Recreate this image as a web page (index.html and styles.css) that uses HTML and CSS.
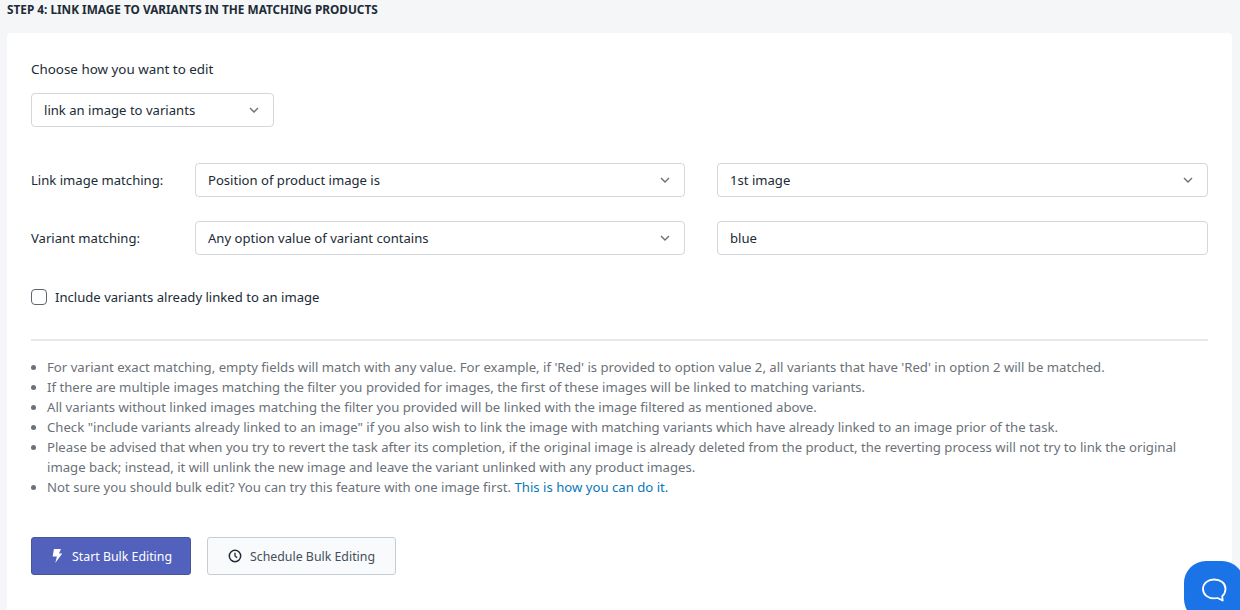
FILE: index.html
```html
<!DOCTYPE html>
<html lang="en">
<head>
    <meta charset="UTF-8">
    <title>Step 4</title>
    <link rel="stylesheet" href="styles.css">
</head>
<body>
    <h2 class="stepTitle">Step 4: Link image to variants in the matching products</h2>

    <section class="card">
        <p class="fieldLabel">Choose how you want to edit</p>
        <div class="select modeSelect">
            <span>link an image to variants</span>
            <svg class="chevron" viewBox="0 0 10 6"><path d="M1 1l4 4 4-4"/></svg>
        </div>

        <div class="matchRow firstRow">
            <label class="rowLabel">Link image matching:</label>
            <div class="select">
                <span>Position of product image is</span>
                <svg class="chevron" viewBox="0 0 10 6"><path d="M1 1l4 4 4-4"/></svg>
            </div>
            <div class="select">
                <span>1st image</span>
                <svg class="chevron" viewBox="0 0 10 6"><path d="M1 1l4 4 4-4"/></svg>
            </div>
        </div>

        <div class="matchRow">
            <label class="rowLabel">Variant matching:</label>
            <div class="select">
                <span>Any option value of variant contains</span>
                <svg class="chevron" viewBox="0 0 10 6"><path d="M1 1l4 4 4-4"/></svg>
            </div>
            <div class="select">
                <span>blue</span>
            </div>
        </div>

        <div class="checkRow">
            <span class="checkbox"></span>
            <span>Include variants already linked to an image</span>
        </div>

        <hr class="divider">

        <ul class="notes">
            <li>For variant exact matching, empty fields will match with any value. For example, if 'Red' is provided to option value 2, all variants that have 'Red' in option 2 will be matched.</li>
            <li>If there are multiple images matching the filter you provided for images, the first of these images will be linked to matching variants.</li>
            <li>All variants without linked images matching the filter you provided will be linked with the image filtered as mentioned above.</li>
            <li>Check "include variants already linked to an image" if you also wish to link the image with matching variants which have already linked to an image prior of the task.</li>
            <li>Please be advised that when you try to revert the task after its completion, if the original image is already deleted from the product, the reverting process will not try to link the original image back; instead, it will unlink the new image and leave the variant unlinked with any product images.</li>
            <li>Not sure you should bulk edit? You can try this feature with one image first. <a href="#">This is how you can do it.</a></li>
        </ul>

        <div class="actions">
            <button class="btn btnPrimary">
                <svg class="btnIcon" viewBox="0 0 12 16"><path fill="#fff" d="M2.500 0h8L8.300 5.200H12L4 16l1.900-7.500H1z"/></svg>
                <span>Start Bulk Editing</span>
            </button>
            <button class="btn btnPlain">
                <svg class="btnIcon" viewBox="0 0 16 16"><circle cx="8" cy="8" r="6.500" fill="none" stroke="#212b36" stroke-width="1.700"/><path d="M8 4.200V8l2.500 2" fill="none" stroke="#212b36" stroke-width="1.500"/></svg>
                <span>Schedule Bulk Editing</span>
            </button>
        </div>
    </section>

    <div class="chatBtn">
        <svg viewBox="0 0 28 28" width="28" height="28"><path d="M14 2.500c6.500 0 11.500 3.700 11.500 9.500 0 3.300-1.300 5.400-3.300 7.200l.5 4.300-5.200-2.500c-1 .3-2.300.4-3.500.4-6 0-11-3.700-11-9.400S8 2.500 14 2.500z" fill="none" stroke="#fff" stroke-width="1.800" stroke-linejoin="round"/></svg>
    </div>
</body>
</html>
```

FILE: styles.css
```css
* {
    box-sizing: border-box;
}

html, body {
    height: 610px;
    overflow: hidden;
}

body {
    margin: 0;
    background-color: #f4f6f8;
    color: #212b36;
    font-family: 'Noto Sans', sans-serif;
    font-size: 13.1px;
    position: relative;
}

.stepTitle {
    margin: 0;
    padding: 2px 7px 0;
    height: 33px;
    font-size: 11.8px;
    line-height: 15px;
    font-weight: 700;
    text-transform: uppercase;
}

.card {
    margin: 0 8px 0 7px;
    height: 600px;
    padding: 26px 24px;
    background: #fff;
    border-radius: 4px;
}

.fieldLabel {
    margin: 0 0 14px;
    font-size: 13.4px;
    line-height: 20px;
}

.select {
    height: 34px;
    padding: 0 14px 0 12px;
    display: flex;
    align-items: center;
    justify-content: space-between;
    border: 1px solid #d3d6da;
    border-radius: 4px;
    background: #fff;
}

.modeSelect {
    width: 243px;
}

.chevron {
    width: 10px;
    height: 6px;
    fill: none;
    stroke: #6b7178;
    stroke-width: 1.4;
}

.matchRow {
    display: grid;
    grid-template-columns: 164px 490px 491px;
    align-items: center;
    margin-top: 24px;
}

.matchRow .select:last-child {
    margin-left: 32px;
    width: 491px;
}

.firstRow {
    margin-top: 36px;
}

.rowLabel {
    font-size: 13.1px;
}

.checkRow {
    margin-top: 32px;
    display: flex;
    align-items: center;
    gap: 8px;
    line-height: 18px;
}

.checkRow span:last-child {
    padding-top: 1px;
}

.checkbox {
    width: 16px;
    height: 16px;
    border: 1px solid #5d6670;
    border-radius: 4px;
}

.divider {
    margin: 33px 0 0;
    border: 0;
    border-top: 2px solid #e6e8ea;
}

.notes {
    margin: 16px 0 0;
    padding-left: 16px;
    font-size: 13.17px;
    color: #6b7178;
    line-height: 20px;
}

.notes a {
    color: #0a78b5;
    text-decoration: none;
}

.actions {
    margin-top: 40px;
    display: flex;
    gap: 16px;
}

.btn {
    height: 38px;
    display: flex;
    align-items: center;
    justify-content: center;
    gap: 8px;
    font: inherit;
    font-size: 12.35px;
    border-radius: 3px;
    white-space: nowrap;
}

.btnIcon {
    width: 14px;
    height: 14px;
}

.btnPrimary {
    width: 160px;
    color: #fff;
    background: #5261bc;
    border: 1px solid #47549f;
}

.btnPlain {
    width: 189px;
    color: #454f5b;
    background: #f9fafb;
    border: 1px solid #c4cdd5;
}

.chatBtn {
    position: absolute;
    left: 1184px;
    top: 561px;
    width: 60px;
    height: 60px;
    border-radius: 22px;
    background: #1a74e8;
    display: flex;
    align-items: center;
    justify-content: center;
}
```
